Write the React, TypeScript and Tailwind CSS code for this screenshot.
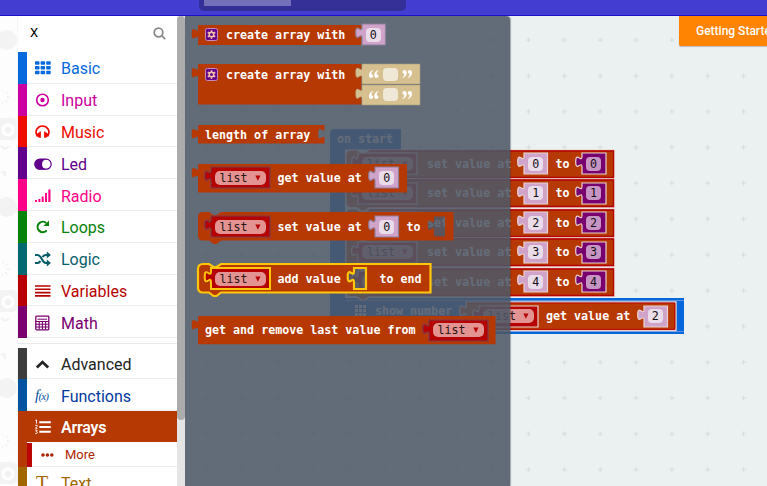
import React from 'react';

// Jigsaw tab on a block's left side, drawn upwards from 14px to 3.5px below the top edge.
const TAB = 'c0 -7 -6.3 5.6 -6.3 -5.25 s6.3 1.75 6.3 -5.25';

function boxPath(x: number, y: number, w: number, h: number) {
  return `M${x} ${y}H${x + w}V${y + h}H${x}V${y + 14}${TAB}Z`;
}

function stackPath(w: number, h: number) {
  return `M0 5Q0 0 5 0H11l4.5 3h3l4.5 -3H${w}V${h}H23l-4.5 3.5h-3l-4.5 -3.5H5Q0 ${h} 0 ${h - 5}Z`;
}

type SocketProps = {
  w: number;
  h?: number;
  fill: string;
  stroke: string;
  strokeWidth?: number;
  className?: string;
  children?: React.ReactNode;
};

function Socket({ w, h = 21, fill, stroke, strokeWidth = 1.2, className = '', children }: SocketProps) {
  return (
    <span className={`relative flex shrink-0 items-center justify-center ${className}`} style={{ width: w, height: h }}>
      <svg className="absolute inset-0 overflow-visible" width={w} height={h}>
        <path d={boxPath(0, 0, w, h)} fill={fill} stroke={stroke} strokeWidth={strokeWidth} />
      </svg>
      {children}
    </span>
  );
}

function Num({ value, className = '', stroke = '#8d7f97', dark = false }: { value: number; className?: string; stroke?: string; dark?: boolean }) {
  return (
    <Socket w={dark ? 24 : 23.5} fill={dark ? '#78006e' : '#d0a3cb'} stroke={stroke} className={className}>
      <span className={`relative flex h-[14px] w-[15px] items-center justify-center rounded-[4px] font-normal text-[#151015] ${dark ? 'bg-[#c795c3]' : 'bg-[#eadce9]'}`}>
        {value}
      </span>
    </Socket>
  );
}

function ListVar({ className = '', stroke = '#7d3a4c', strokeWidth = 1.2 }: { className?: string; stroke?: string; strokeWidth?: number }) {
  return (
    <Socket w={59} fill="#b50202" stroke={stroke} strokeWidth={strokeWidth} className={className}>
      <span className="relative flex h-[14px] w-[51px] items-center rounded-[5px] bg-[#e39391] pl-[5px] font-normal text-[#2a1414]">
        list
        <svg className="ml-[7px]" width="6" height="6" viewBox="0 0 6 6"><path d="M.3.5h5.2L2.9 5.7z" fill="#b50202" /></svg>
      </span>
    </Socket>
  );
}

function Str() {
  return (
    <Socket w={58} h={20} fill="#d7c08f" stroke="#a89c80" strokeWidth={0.6}>
      <span className="relative flex items-center gap-[4px]">
        <Quote />
        <span className="h-[13px] w-[15px] rounded-[4px] bg-[#f0e8d6]" />
        <Quote close />
      </span>
    </Socket>
  );
}

function Quote({ close = false }: { close?: boolean }) {
  return (
    <svg className={close ? 'rotate-180' : ''} width="10" height="8" viewBox="0 0 10 8" fill="#fff">
      <path d="M4.2 0C1.5.8 0 2.5 0 5.2 0 7 .8 8 2.2 8 3.4 8 4.2 7.2 4.2 6.1 4.2 5 3.5 4.3 2.4 4.2 2.3 2.5 3 1.3 4.4.6zM9.5 0C6.8.8 5.3 2.5 5.3 5.2 5.3 7 6.1 8 7.5 8 8.7 8 9.5 7.2 9.5 6.1 9.5 5 8.8 4.3 7.7 4.2 7.6 2.5 8.3 1.3 9.7.6z" />
    </svg>
  );
}

function Gear() {
  return (
    <svg className="relative ml-[7.5px] shrink-0" width="13" height="13" viewBox="0 0 13 13">
      <rect x=".5" y=".5" width="12" height="12" rx="1.8" fill="#66058c" stroke="#c58abf" />
      <path d="M6.5 2.2v8.600M2.8 4.350l7.4 4.3M10.2 4.350l-7.4 4.3" stroke="#efc4a8" strokeWidth="1.7" />
      <circle cx="6.5" cy="6.5" r="2.9" fill="#efc4a8" />
      <circle cx="6.5" cy="6.5" r="1.5" fill="#66058c" />
    </svg>
  );
}

type BlockProps = {
  x: number;
  y: number;
  w: number;
  h: number;
  path: string;
  fill?: string;
  stroke?: string;
  strokeWidth?: number;
  children?: React.ReactNode;
};

// The workspace canvas starts at (185, 16) in window coordinates.
function Block({ x, y, w, h, path, fill = '#b63803', stroke = 'none', strokeWidth = 1.2, children }: BlockProps) {
  return (
    <div className="absolute flex items-center whitespace-pre" style={{ left: x - 185, top: y - 16, width: w, height: h }}>
      <svg className="absolute inset-0 overflow-visible" width={w} height={h}>
        <path d={path} fill={fill} fillRule="evenodd" stroke={stroke} strokeWidth={strokeWidth} />
      </svg>
      {children}
    </div>
  );
}

function T({ className = '', children }: { className?: string; children: string }) {
  return <span className={`relative shrink-0 ${className}`}>{children}</span>;
}

function Dots() {
  return (
    <svg className="relative ml-[9px] shrink-0" width="11" height="11" fill="#fff">
      {[0, 4, 8].map((a) => [0, 4, 8].map((b) => <rect key={`${a}-${b}`} x={a} y={b} width="3" height="3" />))}
    </svg>
  );
}

function WorkspaceBlocks() {
  const edge = '#ead3d0';
  return (
    <>
      <Block x={330} y={129} w={71} h={20} path="M0 5Q0 0 5 0H71V20.5H15V204.5H0Z" fill="#0a66d0">
        <T className="ml-[7px]">on start</T>
      </Block>
      {[0, 1, 2, 3, 4].map((n) => (
        <Block key={n} x={346} y={149.8 + n * 29.5} w={268.5} h={28} path={stackPath(268.5, 28.5)} stroke={edge}>
          <svg className="absolute inset-0 overflow-visible" width="268" height="28">
            <path d="M23 1H267.500V27.500H23" fill="none" stroke="#b50202" strokeWidth="1.3" />
          </svg>
          <ListVar className="ml-[12px]" stroke={edge} />
          <T className="ml-[10px] w-[84px]">set value at</T>
          <Num value={n} className="ml-[13px]" stroke={edge} />
          <T className="ml-[8px] w-[14px]">to</T>
          <Num value={n} className="ml-[12px]" stroke={edge} dark />
        </Block>
      ))}
      <Block x={346} y={297.5} w={338} h={26} path="M0 0H11l4.5 3h3l4.5 -3H338V36H-16V0Z" fill="#0566dc">
        <svg className="absolute inset-0 overflow-visible" width="338" height="36">
          <path d="M0 2.5H338M0 33.500H338" stroke="#7da8e4" strokeWidth=".7" />
        </svg>
        <Dots />
        <T className="ml-[9px] w-[77px]">show number</T>
      </Block>
      <Block x={466} y={302} w={210} h={28.5} path={boxPath(0, 0, 210, 28.5)} stroke={edge} strokeWidth={1.4}>
        <svg className="absolute inset-0 overflow-visible" width="210" height="28">
          <path d="M1 1H208.800V27.400H1" fill="none" stroke="#b50202" />
        </svg>
        <ListVar className="ml-[13px]" stroke={edge} />
        <T className="ml-[8px] w-[84px]">get value at</T>
        <Num value={2} className="ml-[13.5px]" stroke={edge} />
      </Block>
    </>
  );
}

function FlyoutBlocks() {
  return (
    <>
      <Block x={197.5} y={24.5} w={163.5} h={20} path={boxPath(0, 0, 163.5, 20)}>
        <Gear />
        <T className="ml-[8px] w-[120px]">create array with</T>
        <Num value={0} className="ml-[15.5px]" />
      </Block>
      <Block x={197.5} y={64} w={163.5} h={21} path={boxPath(0, 0, 163.5, 40.5)}>
        <Gear />
        <T className="ml-[8px] w-[120px]">create array with</T>
        <span className="ml-[15.5px] flex flex-col gap-[.5px] self-start"><Str /><Str /></span>
      </Block>
      <Block x={197.5} y={125} w={126.5} h={19} path={`M0 0H126.500V3.500c0 7 -6.300 -5.600 -6.300 5.250s6.300 -1.750 6.300 5.250V18.500H0V14${TAB}Z`}>
        <T className="ml-[7.5px]">length of array</T>
      </Block>
      <Block x={197.5} y={163.7} w={209} h={28.5} path={boxPath(0, 0, 209, 28.5)}>
        <ListVar className="ml-[13px]" />
        <T className="ml-[8px] w-[84px]">get value at</T>
        <Num value={0} className="ml-[13.5px]" />
      </Block>
      <Block x={197.5} y={212.300} w={255.5} h={28.5} path={stackPath(255.5, 28.5) + boxPath(236, 4.500, 11, 20)}>
        <ListVar className="ml-[13px]" />
        <T className="ml-[8px] w-[84px]">set value at</T>
        <Num value={0} className="ml-[13.5px]" />
        <T className="ml-[8px]">to</T>
      </Block>
      <Block x={197.5} y={264.3} w={232.5} h={28.5} path={stackPath(232.5, 28.5) + boxPath(156, 4, 12, 21)} stroke="#ffc60a" strokeWidth={2.2}>
        <ListVar className="ml-[13px]" stroke="#ffc60a" strokeWidth={2} />
        <T className="ml-[8px] w-[63px]">add value</T>
        <T className="ml-[39px]">to end</T>
      </Block>
      <Block x={197.5} y={316.1} w={297.5} h={28.2} path={boxPath(0, 0, 297.5, 28.2)}>
        <T className="ml-[7.5px] w-[210px]">get and remove last value from</T>
        <ListVar className="ml-[13.5px]" />
      </Block>
    </>
  );
}

const icons: Record<string, React.ReactNode> = {
  Basic: (
    <g fill="currentColor">
      {[0, 5.6, 11.2].map((x) => [1.2, 6, 10.8].map((y) => <rect key={`${x}-${y}`} x={x} y={y} width="4.5" height="3.5" rx=".7" />))}
    </g>
  ),
  Input: (
    <g>
      <circle cx="7.5" cy="8" r="5.8" fill="none" stroke="currentColor" strokeWidth="1.6" />
      <circle cx="7.5" cy="8" r="2.2" fill="currentColor" />
    </g>
  ),
  Music: (
    <g>
      <path d="M2.3 12.200C-1 6.500 3 2 7.500 2s8.500 4.500 5.200 10.200" fill="none" stroke="currentColor" strokeWidth="1.7" />
      <path d="M4.600 7.500h1.300v6.300H4.600Q1.500 13 1.800 10.600 2.200 8.600 4.600 8.200zM10.400 7.500H9.100v6.300h1.300q3.100-.8 2.800-3.200-.4-2-2.800-2.400z" fill="currentColor" />
    </g>
  ),
  Led: (
    <g>
      <rect x="-.2" y="3.200" width="16.400" height="10" rx="5" fill="none" stroke="currentColor" strokeWidth="1.2" />
      <path d="M4.800 3H12Q7 4 7 8.200t5 5.200H4.800a5.200 5.200 0 0 1 0-10.400z" fill="currentColor" />
    </g>
  ),
  Radio: <path d="M0 14v-2h2v2zM3.400 14v-3h2v3zM6.700 14V8.600h2V14zM10 14V5h2v9zM13.300 14V1.500h2.200V14z" fill="currentColor" />,
  Loops: (
    <g>
      <path d="M11.700 11.400A5.200 5.200 0 1 1 11.200 4" fill="none" stroke="currentColor" strokeWidth="2.1" />
      <path d="M14 1.400V7H8.400z" fill="currentColor" />
    </g>
  ),
  Logic: (
    <g>
      <path d="M0 4h2.500C7 4 6.500 12 11 12h2M0 12h2.500c1.500 0 2.300-.9 2.900-2M7.500 6C8.200 4.800 9.200 4 11 4h2" fill="none" stroke="currentColor" strokeWidth="2" />
      <path d="M11.800 .600 15.900 4 11.800 7.400zM11.800 8.600l4.100 3.400-4.100 3.400z" fill="currentColor" />
    </g>
  ),
  Variables: <path d="M0 3h15.500M0 6.300h15.500M0 9.600h15.500M0 12.900h15.500" stroke="currentColor" strokeWidth="1.6" />,
  Math: (
    <g fill="none" stroke="currentColor" strokeWidth="1.3">
      <rect x=".8" y="1.2" width="13" height="13.6" rx=".8" />
      <path d="M2.500 4.200h9.600" strokeWidth="1" />
      <path d="M.8 6.500h13M.8 9.300h13M.8 12h13M4.200 6.500v8M7.400 6.500v8M10.600 6.500v8" strokeWidth="1.1" />
    </g>
  ),
  Advanced: <path d="M1.800 11.500l5.700-5.400 5.700 5.400" fill="none" stroke="currentColor" strokeWidth="2.8" />,
  Arrays: (
    <g>
      <path d="M4.300 3.300h11.500M4.300 8h11.500M4.300 12.700h11.500" stroke="currentColor" strokeWidth="2" />
      <path d="M.3 1.500 1.500.900V4.600M.2 6.300h1.900v1.300L.4 9.300h2M.2 11.100h2l-1 1.500q1.300.1 1.100 1.200Q2 15 .1 14.600" fill="none" stroke="currentColor" strokeWidth=".9" />
    </g>
  ),
};

const categories = [
  ['Basic', 'bg-[#0769dc]', 'text-[#0769dc]'],
  ['Input', 'bg-[#cc00a0]', 'text-[#cc00a0]'],
  ['Music', 'bg-[#ee0c00]', 'text-[#ee0c00]'],
  ['Led', 'bg-[#60008c]', 'text-[#60008c]'],
  ['Radio', 'bg-[#ff0089]', 'text-[#ff0089]'],
  ['Loops', 'bg-[#07820b]', 'text-[#07820b]'],
  ['Logic', 'bg-[#006970]', 'text-[#075d69]'],
  ['Variables', 'bg-[#b90000]', 'text-[#b90000]'],
  ['Math', 'bg-[#79006e]', 'text-[#79006e]'],
];

function Row({ name, bar, color, icon }: { name: string; bar: string; color: string; icon?: React.ReactNode }) {
  return (
    <div className="flex h-[31.8px] w-[159px] shrink-0">
      <div className={`w-[9px] ${bar}`} />
      <div className={`flex flex-1 items-center border-b border-[#ecedef] pl-[8px] pt-[2px] text-[16px] ${color}`}>
        {icon ?? <svg className="overflow-visible" width="16" height="16" viewBox="0 0 16 16">{icons[name]}</svg>}
        <span className="ml-[10px] pt-[2px] leading-[20px]">{name}</span>
      </div>
    </div>
  );
}

function Toolbox() {
  return (
    <div className="flex w-[167px] shrink-0 overflow-hidden bg-white">
      <div className="flex w-[159px] shrink-0 flex-col">
        <div className="flex h-[36px] shrink-0 items-center justify-between pl-[12px] pr-[11px] text-[13px] text-black">
          <span className="pb-[3px]">X</span>
          <svg className="mb-[2px]" width="13" height="13" viewBox="0 0 13 13" fill="none" stroke="#888" strokeWidth="1.7">
            <circle cx="5.5" cy="5.5" r="4.3" />
            <path d="M8.700 8.700l3.500 3.500" />
          </svg>
        </div>
        {categories.map(([name, bar, color]) => <Row key={name} name={name} bar={bar} color={color} />)}
        <div className="mb-[4px] h-[5.5px] w-full shrink-0 border-b border-[#e9e9ec]" />
        <Row name="Advanced" bar="bg-[#3c3c3c]" color="text-[#232323]" />
        <Row name="Functions" bar="bg-[#0254a0]" color="text-[#0238a0]" icon={<span className="w-[16px] font-['Liberation_Serif',serif] text-[15px] italic leading-[18px] tracking-[-.8px] text-[#0254a0]">f<span className="text-[11px]">(x)</span></span>} />
        <div className="flex h-[31px] shrink-0 items-center bg-[#b63803] pl-[17px] text-[16px] font-semibold text-white">
          <svg className="overflow-visible" width="16" height="16" viewBox="0 0 16 16">{icons.Arrays}</svg>
          <span className="ml-[10px] pt-[2px] tracking-[-.2px]">Arrays</span>
        </div>
        <div className="flex h-[24.5px] shrink-0">
          <div className="w-[9px] bg-[#b63803]" />
          <div className="mt-[1px] w-[5px] bg-[#bb0505]" />
          <div className="flex flex-1 items-center border-b border-[#ecedef] pl-[9px] pt-[1px] text-[13px] text-[#b02505]">
            <svg width="13" height="4" fill="currentColor"><circle cx="2" cy="2" r="1.8" /><circle cx="6.4" cy="2" r="1.8" /><circle cx="10.8" cy="2" r="1.8" /></svg>
            <span className="ml-[11px] pt-[1px]">More</span>
          </div>
        </div>
        <Row name="Text" bar="bg-[#a06600]" color="text-[#a06600]" icon={<span className="w-[16px] pl-[1px] font-['Liberation_Serif',serif] text-[20px]">T</span>} />
      </div>
      <div className="w-[8px] bg-[#e5e5e5]">
        <div className="h-[404px] rounded-full bg-[#acacac]" />
      </div>
    </div>
  );
}

export default function App() {
  return (
    <div className="flex h-[486px] w-[767px] flex-col overflow-hidden bg-white font-[Roboto,sans-serif]">
      <header className="flex h-[16px] shrink-0 items-start border-b border-[#1911cc] bg-[#433dd2]">
        <div className="ml-[199px] h-[10.5px] w-[207px] rounded-b-[5px] bg-[#353098] pl-[5px]">
          <div className="h-[6px] w-[87px] bg-[#736fb9]" />
        </div>
      </header>
      <main className="flex min-h-0 flex-1">
        <div className="w-[18px] shrink-0 overflow-hidden border-r border-[#f4f6f7] bg-[#fdfdfd]">
          <svg width="18" height="470" fill="#f3f3f3">
            {[0, 1, 2].map((i) => (
              <g key={i}>
                <circle cx="7" cy={[24, 191, 372][i]} r="10" />
                <circle cx="2" cy={i * 172 + 81} r="6" fill="none" stroke="#f0f0f0" strokeWidth="3" strokeDasharray="1 3" />
                <rect x="-9" y={i * 172 + 102} width="30" height="22" rx="10" />
                <circle cx="8" cy={i * 172 + 114} r="5" fill="#f3f3f3" stroke="#fff" strokeWidth="3" />
                <path d={`M1 ${i * 172 + 130}q4 5 8 0`} fill="none" stroke="#f1f1f1" strokeWidth="2" />
                <path d={`M0 ${i * 182 + 155}h6v7z`} />
              </g>
            ))}
          </svg>
        </div>
        <Toolbox />
        <section className="relative flex-1 overflow-hidden bg-[#ebf0f0] font-['DejaVu_Sans_Mono',monospace] text-[11.67px] font-bold leading-[14px] text-white">
          <svg className="absolute inset-0" width="582" height="470">
            <defs>
              <pattern id="grid" x="325" y="6" width="35.85" height="35.8" patternUnits="userSpaceOnUse">
                <path d="M16 18h5M18.500 15.500v5" stroke="#d3d9da" strokeWidth=".9" />
              </pattern>
            </defs>
            <rect width="582" height="470" fill="url(#grid)" />
          </svg>
          <WorkspaceBlocks />
          <div className="absolute inset-y-0 left-0 w-[325px] rounded-tr-[4px] bg-[#4f5866]/88 shadow-[1px_0_1px_rgba(60,65,75,0.4)]" />
          <FlyoutBlocks />
          <div className="absolute left-[494px] top-0 flex h-[29.5px] w-[100px] items-center whitespace-nowrap rounded-bl-[2px] bg-[#ff8402] pl-[17px] pt-[1px] font-[Roboto,sans-serif] text-[12px] font-medium text-white shadow-[0_1px_1px_rgba(80,60,100,0.3)]">
            Getting Started
          </div>
        </section>
      </main>
    </div>
  );
}
